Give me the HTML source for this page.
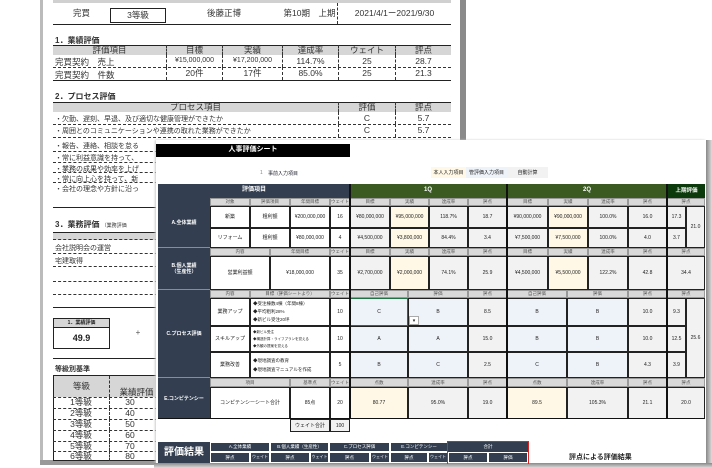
<!DOCTYPE html>
<html><head><meta charset="utf-8"><style>
*{margin:0;padding:0;box-sizing:border-box}
body{width:712px;height:468px;background:#fff;position:relative;overflow:hidden;font-family:"Liberation Sans","Noto Sans CJK JP",sans-serif;color:#222}
.a{position:absolute}
.c{position:absolute;display:flex;align-items:center;justify-content:center;text-align:center;font-size:5px;line-height:1.2;white-space:nowrap;overflow:hidden}
.b{border:1px solid #222}
.g{background:#f2f2f2}
.cr{background:#fff8e6}
.bl{background:#eef2f9}
.sh{background:#d9d9d9;color:#555;font-size:4.5px;border:1px solid #999}
.nv{background:#333f50;color:#fff}
.gr{background:#3a5a22;color:#fff;font-weight:bold;font-size:6px}
.t{font-size:8px}
.bk{font-size:8.5px;color:#333}
.dl{border-bottom:1px dashed #333}
</style></head><body>

<!-- BACK SHEET -->
<div class="a" style="left:40px;top:0;width:3px;height:462px;background:#bbb"></div>
<div class="a" style="left:43px;top:0;width:417px;height:462px;background:#fff"></div>
<div class="a" style="left:460px;top:0;width:6px;height:462px;background:#8a8a8a"></div>
<div class="a" style="left:40px;top:460px;width:426px;height:5px;background:#999"></div>

<div class="a" style="left:53px;top:0;width:398px;height:3px;background:#d0d0d0"></div>
<div class="c bk" style="left:53px;top:3px;width:57px;height:21px">完買</div>
<div class="c bk" style="left:110px;top:8px;width:56px;height:15px;border:1.5px solid #222">3等級</div>
<div class="c bk" style="left:166px;top:3px;width:116px;height:21px">後藤正博</div>
<div class="c bk" style="left:282px;top:3px;width:56px;height:21px;border-right:1px dashed #333">第10期　上期</div>
<div class="c bk" style="left:338px;top:3px;width:113px;height:21px">2021/4/1ー2021/9/30</div>
<div class="a" style="left:53px;top:24px;width:398px;height:1px;background:#222"></div>

<div class="a bk" style="left:55px;top:35px;font-weight:bold;font-size:8px">1．業績評価</div>
<div class="a" style="left:53px;top:45px;width:398px;height:10px;background:#d6d6d6;border-top:1px solid #222"></div>
<div class="c bk" style="left:53px;top:45px;width:113px;height:10px">評価項目</div>
<div class="c bk" style="left:166px;top:45px;width:56px;height:10px;border-left:1px dashed #333">目標</div>
<div class="c bk" style="left:222px;top:45px;width:60px;height:10px;border-left:1px dashed #333">実績</div>
<div class="c bk" style="left:282px;top:45px;width:56px;height:10px;border-left:1px dashed #333">達成率</div>
<div class="c bk" style="left:338px;top:45px;width:57px;height:10px;border-left:1px dashed #333">ウェイト</div>
<div class="c bk" style="left:395px;top:45px;width:56px;height:10px;border-left:1px dashed #333">評点</div>
<div class="a bk" style="left:55px;top:56px">完買契約　売上</div>
<div class="c bk" style="left:166px;top:55px;width:56px;height:12px;border-left:1px dashed #333;font-size:7px">¥15,000,000</div>
<div class="c bk" style="left:222px;top:55px;width:60px;height:12px;border-left:1px dashed #333;font-size:7px">¥17,200,000</div>
<div class="c bk" style="left:282px;top:55px;width:56px;height:12px;border-left:1px dashed #333">114.7%</div>
<div class="c bk" style="left:338px;top:55px;width:57px;height:12px;border-left:1px dashed #333">25</div>
<div class="c bk" style="left:395px;top:55px;width:56px;height:12px;border-left:1px dashed #333">28.7</div>
<div class="a dl" style="left:53px;top:67px;width:398px"></div>
<div class="a bk" style="left:55px;top:69px">完買契約　件数</div>
<div class="c bk" style="left:166px;top:67px;width:56px;height:13px;border-left:1px dashed #333">20件</div>
<div class="c bk" style="left:222px;top:67px;width:60px;height:13px;border-left:1px dashed #333">17件</div>
<div class="c bk" style="left:282px;top:67px;width:56px;height:13px;border-left:1px dashed #333">85.0%</div>
<div class="c bk" style="left:338px;top:67px;width:57px;height:13px;border-left:1px dashed #333">25</div>
<div class="c bk" style="left:395px;top:67px;width:56px;height:13px;border-left:1px dashed #333">21.3</div>
<div class="a" style="left:53px;top:80px;width:398px;height:1px;background:#222"></div>

<div class="a bk" style="left:55px;top:91px;font-weight:bold;font-size:8px">2．プロセス評価</div>
<div class="a" style="left:53px;top:102px;width:398px;height:10px;background:#d6d6d6;border-top:1px solid #222"></div>
<div class="c bk" style="left:53px;top:102px;width:285px;height:10px">プロセス項目</div>
<div class="c bk" style="left:338px;top:102px;width:57px;height:10px;border-left:1px dashed #333">評価</div>
<div class="c bk" style="left:395px;top:102px;width:56px;height:10px;border-left:1px dashed #333">評点</div>
<div class="a bk" style="left:55px;top:114px;font-size:7px">・欠勤、遅刻、早退、及び適切な健康管理ができたか</div>
<div class="c bk" style="left:338px;top:112px;width:57px;height:12px;border-left:1px dashed #333">C</div>
<div class="c bk" style="left:395px;top:112px;width:56px;height:12px;border-left:1px dashed #333">5.7</div>
<div class="a dl" style="left:53px;top:124px;width:398px"></div>
<div class="a bk" style="left:55px;top:126px;font-size:7px">・周囲とのコミュニケーションや連携の取れた業務ができたか</div>
<div class="c bk" style="left:338px;top:124px;width:57px;height:13px;border-left:1px dashed #333">C</div>
<div class="c bk" style="left:395px;top:124px;width:56px;height:13px;border-left:1px dashed #333">5.7</div>
<div class="a dl" style="left:53px;top:137px;width:398px"></div>
<div class="a bk" style="left:55px;top:141px;font-size:7px">・報告、連絡、相談を怠る</div>
<div class="a dl" style="left:53px;top:151px;width:110px"></div>
<div class="a bk" style="left:55px;top:153px;font-size:7px">・常に利益意識を持って、</div>
<div class="a dl" style="left:53px;top:162px;width:110px"></div>
<div class="a bk" style="left:55px;top:164px;font-size:7px">・業務の成果や効率を上げ</div>
<div class="a dl" style="left:53px;top:172px;width:110px"></div>
<div class="a bk" style="left:55px;top:174px;font-size:7px">・常に向上心を持って、新</div>
<div class="a dl" style="left:53px;top:182px;width:110px"></div>
<div class="a bk" style="left:55px;top:184px;font-size:7px">・会社の理念や方針に沿っ</div>
<div class="a" style="left:53px;top:207px;width:110px;height:1px;background:#222"></div>

<div class="a bk" style="left:55px;top:219px;font-weight:bold;font-size:8px">3．業務評価 <span style="font-size:5px;font-weight:normal">（業務評価</span></div>
<div class="a" style="left:53px;top:232px;width:110px;height:8px;background:#d6d6d6;border-top:1px solid #222;border-bottom:1px dashed #333"></div>
<div class="a bk" style="left:55px;top:243px;font-size:7px">会社説明会の運営</div>
<div class="a dl" style="left:53px;top:253px;width:110px"></div>
<div class="a bk" style="left:55px;top:256px;font-size:7px">宅建取得</div>
<div class="a dl" style="left:53px;top:266px;width:110px"></div>
<div class="a dl" style="left:53px;top:281px;width:110px"></div>
<div class="a dl" style="left:53px;top:294px;width:110px"></div>
<div class="a" style="left:53px;top:307px;width:110px;height:1px;background:#222"></div>

<div class="a" style="left:53px;top:318px;width:57px;height:31px;border:1px solid #222"></div>
<div class="c" style="left:53px;top:318px;width:57px;height:10px;background:#d6d6d6;border:1px solid #222;font-size:5px;font-weight:bold">1．業績評価</div>
<div class="c" style="left:53px;top:328px;width:57px;height:21px;font-size:9px;font-weight:bold">49.9</div>
<div class="c" style="left:132px;top:328px;width:12px;height:10px;font-size:8px;color:#555">+</div>
<div class="a" style="left:53px;top:358px;width:110px;height:1px;background:#222"></div>
<div class="a bk" style="left:55px;top:364px;font-size:7px;font-weight:bold">等級別基準</div>
<div class="a" style="left:53px;top:375px;width:110px;height:86px;border:1px solid #222;background:#fff"></div>
<div class="c bk" style="left:54px;top:376px;width:56px;height:21px;background:#d6d6d6;border-right:1px dashed #333">等級</div>
<div class="c bk" style="left:110px;top:376px;width:53px;height:21px;background:#d6d6d6;align-items:flex-end">業績評価</div>
<div class="a dl" style="left:53px;top:397px;width:110px"></div>
<div class="c bk" style="left:53px;top:397px;width:57px;height:11px;border-right:1px dashed #333">1等級</div><div class="c bk" style="left:110px;top:397px;width:40px;height:11px">30</div>
<div class="a dl" style="left:53px;top:408px;width:110px"></div>
<div class="c bk" style="left:53px;top:408px;width:57px;height:11px;border-right:1px dashed #333">2等級</div><div class="c bk" style="left:110px;top:408px;width:40px;height:11px">40</div>
<div class="a dl" style="left:53px;top:419px;width:110px"></div>
<div class="c bk" style="left:53px;top:419px;width:57px;height:11px;border-right:1px dashed #333">3等級</div><div class="c bk" style="left:110px;top:419px;width:40px;height:11px">50</div>
<div class="a dl" style="left:53px;top:430px;width:110px"></div>
<div class="c bk" style="left:53px;top:430px;width:57px;height:11px;border-right:1px dashed #333">4等級</div><div class="c bk" style="left:110px;top:430px;width:40px;height:11px">60</div>
<div class="a dl" style="left:53px;top:441px;width:110px"></div>
<div class="c bk" style="left:53px;top:441px;width:57px;height:10px;border-right:1px dashed #333">5等級</div><div class="c bk" style="left:110px;top:441px;width:40px;height:10px">70</div>
<div class="a dl" style="left:53px;top:451px;width:110px"></div>
<div class="c bk" style="left:53px;top:451px;width:57px;height:10px;border-right:1px dashed #333">6等級</div><div class="c bk" style="left:110px;top:451px;width:40px;height:10px">80</div>

<!-- FRONT SHEET -->
<div class="a" style="left:156px;top:140px;width:550px;height:323px;background:#fff;box-shadow:-1px 0 2px #ccc"></div>
<div class="a" style="left:706px;top:140px;width:6px;height:328px;background:linear-gradient(90deg,#888,#ddd)"></div>
<div class="a" style="left:154px;top:463px;width:558px;height:5px;background:linear-gradient(#888,#ddd)"></div>

<div class="c" style="left:156px;top:144px;width:194px;height:13px;background:#000;color:#fff;font-size:7px;font-weight:bold">人事評価シート</div>
<div class="a" style="left:260px;top:170px;font-size:5px;color:#888">1</div>
<div class="a" style="left:268px;top:170px;font-size:5px;color:#223">事前入力項目</div>
<div class="c" style="left:431px;top:167px;width:35px;height:11px;background:#fff8e6">本人入力項目</div>
<div class="c" style="left:466px;top:167px;width:41px;height:11px;background:#eef2f9">管評価入力項目</div>
<div class="c" style="left:507px;top:167px;width:41px;height:11px;background:#f2f2f2">自動計算</div>

<!-- header -->
<div class="c nv" style="left:158px;top:184px;width:192px;height:14px;font-size:6px;font-weight:bold">評価項目</div>
<div class="c gr" style="left:350px;top:184px;width:157px;height:14px;border-right:1px solid #000">1Q</div>
<div class="c gr" style="left:507px;top:184px;width:160px;height:14px">2Q</div>
<div class="c" style="left:667px;top:184px;width:38px;height:14px;background:#0c3a0c;color:#fff;font-size:5.5px;font-weight:bold;border-left:1px solid #000">上期評価</div>

<!-- left nav column -->
<div class="a nv" style="left:158px;top:198px;width:52px;height:221px"></div>
<div class="c nv" style="left:158px;top:198px;width:52px;height:50px;font-weight:bold;border-bottom:1px solid #8090a0">A.全体業績</div>
<div class="c nv" style="left:158px;top:248px;width:52px;height:42px;font-weight:bold;border-bottom:1px solid #8090a0;white-space:normal">B.個人業績<br>（生産性）</div>
<div class="c nv" style="left:158px;top:290px;width:52px;height:88px;font-weight:bold;border-bottom:1px solid #8090a0">C.プロセス評価</div>
<div class="c nv" style="left:158px;top:378px;width:52px;height:41px;font-weight:bold">E.コンピテンシー</div>

<!-- A subheader -->
<div class="c sh" style="left:210px;top:198px;width:40px;height:8px">対象</div>
<div class="c sh" style="left:250px;top:198px;width:40px;height:8px">評価項目</div>
<div class="c sh" style="left:290px;top:198px;width:40px;height:8px">年間目標</div>
<div class="c sh" style="left:330px;top:198px;width:20px;height:8px">ウェイト</div>
<div class="c sh" style="left:350px;top:198px;width:40px;height:8px">目標</div>
<div class="c sh" style="left:390px;top:198px;width:39px;height:8px">実績</div>
<div class="c sh" style="left:429px;top:198px;width:39px;height:8px">達成率</div>
<div class="c sh" style="left:468px;top:198px;width:39px;height:8px">評点</div>
<div class="c sh" style="left:507px;top:198px;width:41px;height:8px">目標</div>
<div class="c sh" style="left:548px;top:198px;width:40px;height:8px">実績</div>
<div class="c sh" style="left:588px;top:198px;width:40px;height:8px">達成率</div>
<div class="c sh" style="left:628px;top:198px;width:39px;height:8px">評点</div>
<div class="c sh" style="left:667px;top:198px;width:38px;height:8px">評点</div>
<!-- A rows -->
<div class="c b" style="left:210px;top:206px;width:40px;height:22px">新築</div>
<div class="c b" style="left:250px;top:206px;width:40px;height:22px">粗利額</div>
<div class="c b" style="left:290px;top:206px;width:40px;height:22px">¥200,000,000</div>
<div class="c b" style="left:330px;top:206px;width:20px;height:22px">16</div>
<div class="c b g" style="left:350px;top:206px;width:40px;height:22px">¥80,000,000</div>
<div class="c b cr" style="left:390px;top:206px;width:39px;height:22px">¥95,000,000</div>
<div class="c b g" style="left:429px;top:206px;width:39px;height:22px">118.7%</div>
<div class="c b g" style="left:468px;top:206px;width:39px;height:22px">18.7</div>
<div class="c b g" style="left:507px;top:206px;width:41px;height:22px">¥90,000,000</div>
<div class="c b cr" style="left:548px;top:206px;width:40px;height:22px">¥90,000,000</div>
<div class="c b g" style="left:588px;top:206px;width:40px;height:22px">100.0%</div>
<div class="c b g" style="left:628px;top:206px;width:39px;height:22px">16.0</div>
<div class="c b g" style="left:667px;top:206px;width:19px;height:22px">17.3</div>
<div class="c b" style="left:210px;top:228px;width:40px;height:20px">リフォーム</div>
<div class="c b" style="left:250px;top:228px;width:40px;height:20px">粗利額</div>
<div class="c b" style="left:290px;top:228px;width:40px;height:20px">¥80,000,000</div>
<div class="c b" style="left:330px;top:228px;width:20px;height:20px">4</div>
<div class="c b g" style="left:350px;top:228px;width:40px;height:20px">¥4,500,000</div>
<div class="c b cr" style="left:390px;top:228px;width:39px;height:20px">¥3,800,000</div>
<div class="c b g" style="left:429px;top:228px;width:39px;height:20px">84.4%</div>
<div class="c b g" style="left:468px;top:228px;width:39px;height:20px">3.4</div>
<div class="c b g" style="left:507px;top:228px;width:41px;height:20px">¥7,500,000</div>
<div class="c b cr" style="left:548px;top:228px;width:40px;height:20px">¥7,500,000</div>
<div class="c b g" style="left:588px;top:228px;width:40px;height:20px">100.0%</div>
<div class="c b g" style="left:628px;top:228px;width:39px;height:20px">4.0</div>
<div class="c b g" style="left:667px;top:228px;width:19px;height:20px">3.7</div>
<div class="c b g" style="left:686px;top:206px;width:19px;height:42px">21.0</div>

<!-- B -->
<div class="c sh" style="left:210px;top:248px;width:60px;height:8px">内容</div>
<div class="c sh" style="left:270px;top:248px;width:60px;height:8px">年間目標</div>
<div class="c sh" style="left:330px;top:248px;width:20px;height:8px">ウェイト</div>
<div class="c sh" style="left:350px;top:248px;width:40px;height:8px">目標</div>
<div class="c sh" style="left:390px;top:248px;width:39px;height:8px">実績</div>
<div class="c sh" style="left:429px;top:248px;width:39px;height:8px">達成率</div>
<div class="c sh" style="left:468px;top:248px;width:39px;height:8px">評点</div>
<div class="c sh" style="left:507px;top:248px;width:41px;height:8px">目標</div>
<div class="c sh" style="left:548px;top:248px;width:40px;height:8px">実績</div>
<div class="c sh" style="left:588px;top:248px;width:40px;height:8px">達成率</div>
<div class="c sh" style="left:628px;top:248px;width:39px;height:8px">評点</div>
<div class="c sh" style="left:667px;top:248px;width:38px;height:8px">評点</div>
<div class="c b" style="left:210px;top:256px;width:60px;height:34px">営業利益額</div>
<div class="c b" style="left:270px;top:256px;width:60px;height:34px">¥18,000,000</div>
<div class="c b" style="left:330px;top:256px;width:20px;height:34px">35</div>
<div class="c b g" style="left:350px;top:256px;width:40px;height:34px">¥2,700,000</div>
<div class="c b cr" style="left:390px;top:256px;width:39px;height:34px">¥2,000,000</div>
<div class="c b g" style="left:429px;top:256px;width:39px;height:34px">74.1%</div>
<div class="c b g" style="left:468px;top:256px;width:39px;height:34px">25.9</div>
<div class="c b g" style="left:507px;top:256px;width:41px;height:34px">¥4,500,000</div>
<div class="c b cr" style="left:548px;top:256px;width:40px;height:34px">¥5,500,000</div>
<div class="c b g" style="left:588px;top:256px;width:40px;height:34px">122.2%</div>
<div class="c b g" style="left:628px;top:256px;width:39px;height:34px">42.8</div>
<div class="c b g" style="left:667px;top:256px;width:38px;height:34px">34.4</div>

<!-- C -->
<div class="c sh" style="left:210px;top:290px;width:40px;height:8px">内容</div>
<div class="c sh" style="left:250px;top:290px;width:80px;height:8px">目標（評価シートより）</div>
<div class="c sh" style="left:330px;top:290px;width:20px;height:8px">ウェイト</div>
<div class="c sh" style="left:350px;top:290px;width:58px;height:8px">自己評価</div>
<div class="c sh" style="left:408px;top:290px;width:60px;height:8px">評価</div>
<div class="c sh" style="left:468px;top:290px;width:39px;height:8px">評点</div>
<div class="c sh" style="left:507px;top:290px;width:60px;height:8px">自己評価</div>
<div class="c sh" style="left:567px;top:290px;width:61px;height:8px">評価</div>
<div class="c sh" style="left:628px;top:290px;width:39px;height:8px">評点</div>
<div class="c sh" style="left:667px;top:290px;width:38px;height:8px">評点</div>

<div class="c b" style="left:210px;top:298px;width:40px;height:28px">業務アップ</div>
<div class="a b" style="left:250px;top:298px;width:80px;height:28px;font-size:4.5px;line-height:8px;padding:1px 2px;white-space:nowrap">◆受注棟数4棟（年間8棟）<br>◆平均粗利28%<br>◆新ビル受注20坪</div>
<div class="c b" style="left:330px;top:298px;width:20px;height:28px">10</div>
<div class="c bl" style="left:350px;top:298px;width:58px;height:28px;border:1.5px solid #217346">C</div>
<div class="c b bl" style="left:408px;top:298px;width:60px;height:28px">B</div>
<div class="c" style="left:409px;top:316px;width:10px;height:9px;background:#fff;border:1px solid #aaa;font-size:5px">▾</div>
<div class="c b g" style="left:468px;top:298px;width:39px;height:28px">8.5</div>
<div class="c b bl" style="left:507px;top:298px;width:60px;height:28px">B</div>
<div class="c b bl" style="left:567px;top:298px;width:61px;height:28px">B</div>
<div class="c b g" style="left:628px;top:298px;width:39px;height:28px">10.0</div>
<div class="c b g" style="left:667px;top:298px;width:19px;height:28px">9.3</div>

<div class="c b" style="left:210px;top:326px;width:40px;height:26px">スキルアップ</div>
<div class="a b" style="left:250px;top:326px;width:80px;height:26px;font-size:3.5px;line-height:7px;padding:2px 2px;white-space:nowrap">◆新ビル受注<br>◆構造計算・ライフプランを覚える<br>◆外観の提案を覚える</div>
<div class="c b" style="left:330px;top:326px;width:20px;height:26px">10</div>
<div class="c b bl" style="left:350px;top:326px;width:58px;height:26px">A</div>
<div class="c b bl" style="left:408px;top:326px;width:60px;height:26px">A</div>
<div class="c b g" style="left:468px;top:326px;width:39px;height:26px">15.0</div>
<div class="c b bl" style="left:507px;top:326px;width:60px;height:26px">B</div>
<div class="c b bl" style="left:567px;top:326px;width:61px;height:26px">B</div>
<div class="c b g" style="left:628px;top:326px;width:39px;height:26px">10.0</div>
<div class="c b g" style="left:667px;top:326px;width:19px;height:26px">12.5</div>

<div class="c b" style="left:210px;top:352px;width:40px;height:26px">業務改善</div>
<div class="a b" style="left:250px;top:352px;width:80px;height:26px;font-size:4.5px;line-height:9px;padding:3px 2px;white-space:nowrap">◆現地調査の教育<br>◆現地調査マニュアルを作成</div>
<div class="c b" style="left:330px;top:352px;width:20px;height:26px">5</div>
<div class="c b bl" style="left:350px;top:352px;width:58px;height:26px">B</div>
<div class="c b bl" style="left:408px;top:352px;width:60px;height:26px">C</div>
<div class="c b g" style="left:468px;top:352px;width:39px;height:26px">2.5</div>
<div class="c b bl" style="left:507px;top:352px;width:60px;height:26px">C</div>
<div class="c b bl" style="left:567px;top:352px;width:61px;height:26px">B</div>
<div class="c b g" style="left:628px;top:352px;width:39px;height:26px">4.3</div>
<div class="c b g" style="left:667px;top:352px;width:19px;height:26px">3.9</div>
<div class="c b g" style="left:686px;top:298px;width:19px;height:80px">25.6</div>

<!-- D -->
<div class="c sh" style="left:210px;top:378px;width:80px;height:9px">項目</div>
<div class="c sh" style="left:290px;top:378px;width:40px;height:9px">基準点</div>
<div class="c sh" style="left:330px;top:378px;width:20px;height:9px">ウェイト</div>
<div class="c sh" style="left:350px;top:378px;width:58px;height:9px">点数</div>
<div class="c sh" style="left:408px;top:378px;width:60px;height:9px">達成率</div>
<div class="c sh" style="left:468px;top:378px;width:39px;height:9px">評点</div>
<div class="c sh" style="left:507px;top:378px;width:60px;height:9px">点数</div>
<div class="c sh" style="left:567px;top:378px;width:61px;height:9px">達成率</div>
<div class="c sh" style="left:628px;top:378px;width:39px;height:9px">評点</div>
<div class="c sh" style="left:667px;top:378px;width:38px;height:9px">評点</div>
<div class="c b" style="left:210px;top:387px;width:80px;height:32px">コンピテンシーシート合計</div>
<div class="c b" style="left:290px;top:387px;width:40px;height:32px">85点</div>
<div class="c b" style="left:330px;top:387px;width:20px;height:32px">20</div>
<div class="c b cr" style="left:350px;top:387px;width:58px;height:32px">80.77</div>
<div class="c b g" style="left:408px;top:387px;width:60px;height:32px">95.0%</div>
<div class="c b g" style="left:468px;top:387px;width:39px;height:32px">19.0</div>
<div class="c b cr" style="left:507px;top:387px;width:60px;height:32px">89.5</div>
<div class="c b g" style="left:567px;top:387px;width:61px;height:32px">105.3%</div>
<div class="c b g" style="left:628px;top:387px;width:39px;height:32px">21.1</div>
<div class="c b g" style="left:667px;top:387px;width:38px;height:32px">20.0</div>
<div class="c b g" style="left:290px;top:419px;width:40px;height:13px">ウェイト合計</div>
<div class="c b g" style="left:330px;top:419px;width:20px;height:13px">100</div>

<!-- thick separators -->
<div class="a" style="left:349px;top:184px;width:2px;height:235px;background:#111"></div>
<div class="a" style="left:506px;top:184px;width:2px;height:235px;background:#111"></div>
<div class="a" style="left:666px;top:184px;width:2px;height:235px;background:#111"></div>
<div class="a" style="left:158px;top:418px;width:547px;height:1px;background:#111"></div>

<!-- 評価結果 -->
<div class="c nv" style="left:158px;top:442px;width:52px;height:21px;font-size:10px;font-weight:bold">評価結果</div>
<div class="c nv" style="left:210px;top:442px;width:60px;height:10px;border:1px solid #fff;font-size:4.5px">A.全体業績</div>
<div class="c nv" style="left:270px;top:442px;width:59px;height:10px;border:1px solid #fff;font-size:4.5px">B.個人業績（生産性）</div>
<div class="c nv" style="left:329px;top:442px;width:61px;height:10px;border:1px solid #fff;font-size:4.5px">C.プロセス評価</div>
<div class="c nv" style="left:390px;top:442px;width:58px;height:10px;border:1px solid #fff;font-size:4.5px">E.コンピテンシー</div>
<div class="c nv" style="left:448px;top:442px;width:80px;height:10px;font-size:4.5px">合計</div>
<div class="c nv" style="left:210px;top:452px;width:40px;height:11px;border:1px solid #fff;font-size:4.5px">評点</div>
<div class="c nv" style="left:250px;top:452px;width:20px;height:11px;border:1px solid #fff;font-size:4px">ウェイト</div>
<div class="c nv" style="left:270px;top:452px;width:40px;height:11px;border:1px solid #fff;font-size:4.5px">評点</div>
<div class="c nv" style="left:310px;top:452px;width:19px;height:11px;border:1px solid #fff;font-size:4px">ウェイト</div>
<div class="c nv" style="left:329px;top:452px;width:41px;height:11px;border:1px solid #fff;font-size:4.5px">評点</div>
<div class="c nv" style="left:370px;top:452px;width:20px;height:11px;border:1px solid #fff;font-size:4px">ウェイト</div>
<div class="c nv" style="left:390px;top:452px;width:38px;height:11px;border:1px solid #fff;font-size:4.5px">評点</div>
<div class="c nv" style="left:428px;top:452px;width:20px;height:11px;border:1px solid #fff;font-size:4px">ウェイト</div>
<div class="c nv" style="left:448px;top:452px;width:40px;height:11px;border:1px solid #fff;font-size:4.5px">評点</div>
<div class="c nv" style="left:488px;top:452px;width:40px;height:11px;border:1px solid #fff;font-size:4.5px">評価</div>
<div class="a" style="left:447px;top:441px;width:82px;height:23px;border:1.5px solid #d22;border-bottom:none"></div>
<div class="a" style="left:569px;top:452px;font-size:7px;font-weight:bold;color:#222">評点による評価結果</div>

</body></html>
